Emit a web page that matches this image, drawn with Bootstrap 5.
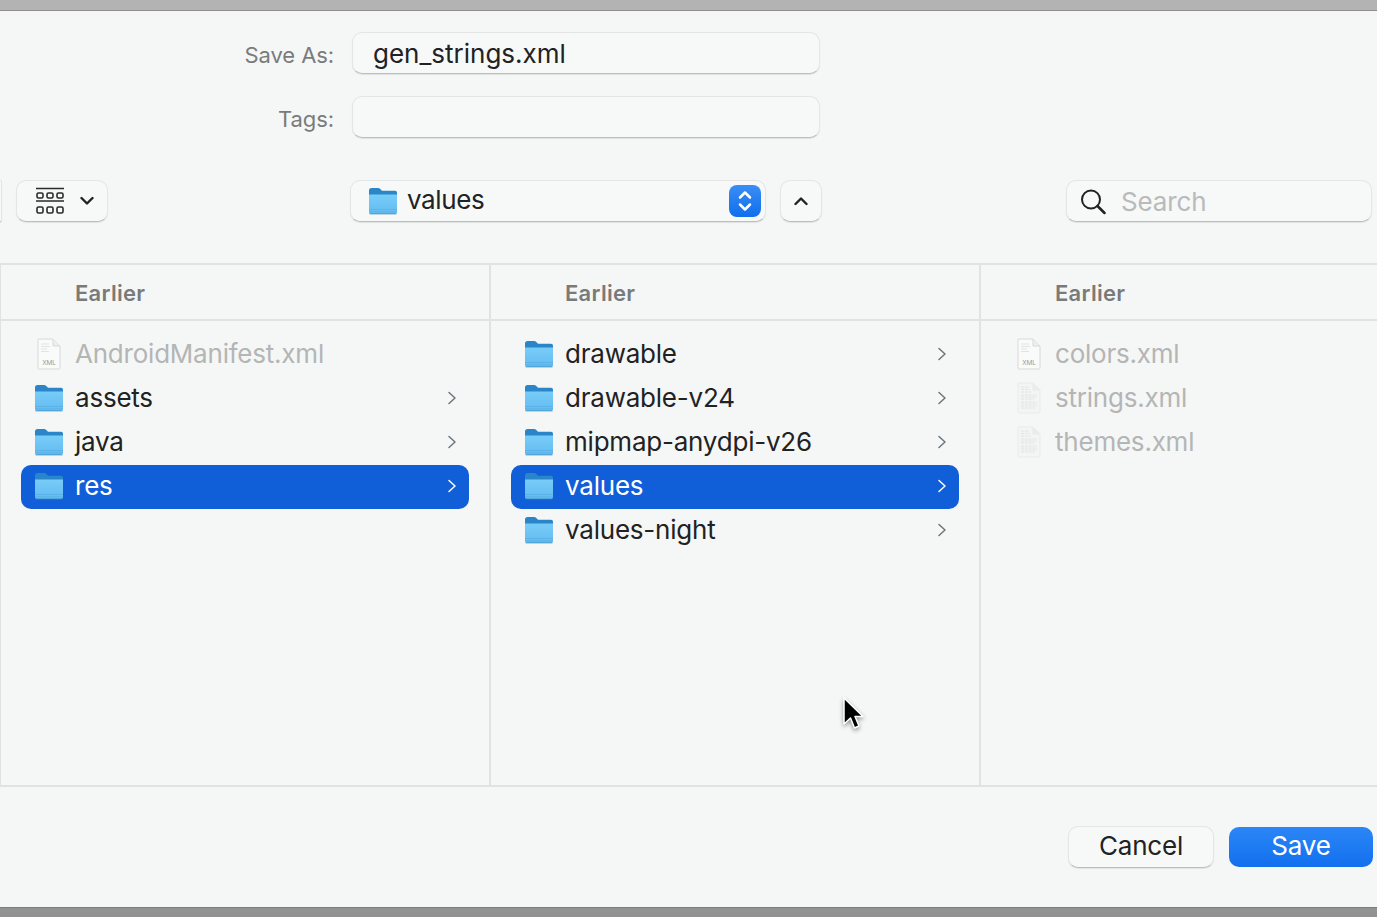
<!DOCTYPE html>
<html lang="en">
<head>
  <meta charset="UTF-8" />
  <title>Save</title>
  <meta name="viewport" content="width=device-width, initial-scale=1">
  <link href="https://cdn.jsdelivr.net/npm/bootstrap@5.3.3/dist/css/bootstrap.min.css" rel="stylesheet">
  <style>
    html, body { height: 917px; overflow: hidden; }
    body { background: #f5f7f6; font-family: Inter, "Liberation Sans", sans-serif; color: #222; position: relative; }
    .edge-top { height: 11px; background: #b3b3b3; border-bottom: 1px solid #8e8e8e; }
    .edge-bottom { height: 10px; background: #929292; border-top: 1px solid #7d7d7d; }
    .sheet { height: 896px; }
    .name-row { padding-top: 21px; height: 63px; }
    .tags-row { padding-top: 22px; height: 64px; }
    .field-label { width: 335px; padding-right: 1px; text-align: right; font-size: 22px; line-height: 46px; letter-spacing: -.1px; color: #7b7b7b; }
    .mac-field { margin-left: 17px; width: 468px; height: 42px; border: 1px solid #e4e5e5; border-bottom-color: #bdbdbd; border-radius: 10px; background: #f7f8f8; padding: 0 20px; font-size: 26px; line-height: 42px; color: #222; box-shadow: 0 1px 1px rgba(0,0,0,.08); }
    .tool-row { height: 42px; margin-top: 42px; }
    .mac-btn { height: 42px; background: #f7f8f8; border: 1px solid #e4e5e5; border-bottom-color: #bdbdbd; border-radius: 10px; box-shadow: 0 1px 1px rgba(0,0,0,.08); flex: none; }
    .stub-btn { width: 2px; border-left: 0; border-radius: 0 6px 6px 0; }
    .view-btn { width: 92px; margin-left: 14px; padding-left: 18px; gap: 15px; }
    .path-btn { width: 416px; margin-left: 242px; padding: 0 4px 0 17px; font-size: 26px; letter-spacing: -.4px; }
    .path-name { margin-left: 9px; flex: 1; line-height: 36px; padding-bottom: 3px; }
    .up-btn { width: 42px; margin-left: 14px; }
    .search-btn { width: 306px; margin-left: 244px; padding-left: 13px; font-size: 26px; letter-spacing: -.15px; color: #b9baba; }
    .search-btn span { margin-left: 15px; line-height: 40px; padding-top: 2px; }
    .stepper { width: 32px; height: 32px; border-radius: 8px; background: linear-gradient(#3a8df5, #0f6fec); }
    .browser { height: 524px; margin-top: 41px; border-top: 2px solid #e1e3e2; border-bottom: 2px solid #e1e3e2; border-left: 1px solid #e1e3e2; }
    .pane { width: 490px; flex: none; border-right: 2px solid #e1e3e2; }
    .pane-last { width: 396px; border-right: 0; }
    .pane-head { height: 56px; border-bottom: 2px solid #e1e3e2; padding-left: 74px; font-size: 22px; font-weight: 600; letter-spacing: .3px; color: #7a7a7a; line-height: 57px; }
    .pane-list { padding: 11px 20px 0; margin: 0; list-style: none; }
    .pane-last .pane-list { padding-right: 0; }
    .file-row { height: 44px; border-radius: 10px; padding-left: 12.500px; padding-right: 12px; font-size: 26px; letter-spacing: -.22px; line-height: 44px; }
    .file-row svg.ico { flex: none; }
    .file-name { margin-left: 11.500px; flex: 1; white-space: nowrap; }
    .is-off { color: #b4b5b5; }
    .is-picked { background: #115fd8; color: #fff; margin-top: 1px; margin-bottom: -1px; padding-bottom: 2px; }
    .footer-row { height: 42px; margin-top: 39px; padding-right: 4px; gap: 15px; }
    .cancel-btn { width: 146px; font-size: 26px; letter-spacing: -.2px; line-height: 36px; padding: 0 0 2px; text-align: center; color: #222; }
    .save-btn { width: 144px; height: 40px; border-radius: 10px; border: 0; background: linear-gradient(#2b87f6, #126fee); color: #fff; font-size: 26px; letter-spacing: -.2px; line-height: 36px; padding: 0 0 2px; }
    .arrow-cursor { position: absolute; left: 842px; top: 697px; filter: drop-shadow(0 2px 2px rgba(0,0,0,.4)); }
  </style>
</head>
<body>

<svg width="0" height="0" class="d-block position-absolute">
  <defs>
    <linearGradient id="folderFill" x1="0" y1="0" x2="0" y2="1">
      <stop offset="0" stop-color="#78ccf8"/>
      <stop offset="1" stop-color="#62bbf0"/>
    </linearGradient>
    <symbol id="folder" viewBox="0 0 30 28">
      <path d="M1 3.500C1 2 2 1 3.500 1h6.500c1 0 1.700.4 2.300 1l1.700 1.800H27c1.200 0 2 .8 2 2V9H1z" fill="#2a86c8"/>
      <path d="M1 7.500h28V25c0 1.300-.8 2-2 2H3c-1.200 0-2-.7-2-2z" fill="url(#folderFill)"/>
      <path d="M1 22.500h28M1 24.800h28" stroke="#58aee4" stroke-width=".7" fill="none"/>
      <path d="M1.500 26.900h27" stroke="#3f8dc4" stroke-width=".8" fill="none"/>
    </symbol>
    <symbol id="xmlfile" viewBox="0 0 26 32">
      <path d="M2 1h15l7 7v22c0 .6-.4 1-1 1H3c-.6 0-1-.4-1-1z" fill="#f9fafa" stroke="#d8d9d9"/>
      <path d="M17 1v7h7" fill="#eeeeee" stroke="#d8d9d9"/>
      <path d="M5 6h8M5 8.500h9M5 11h6M5 13.500h8" stroke="#e2e2e2" stroke-width="1"/>
      <text x="13" y="27" font-size="6.500" text-anchor="middle" fill="#9b9b9b" font-family="Inter, sans-serif">XML</text>
    </symbol>
    <symbol id="txtfile" viewBox="0 0 26 32">
      <path d="M2 1h15l7 7v22c0 .6-.4 1-1 1H3c-.6 0-1-.4-1-1z" fill="#f3f4f4" stroke="#e9eaea"/>
      <path d="M17 1v7h7" fill="#ebebeb" stroke="#e9eaea"/>
      <path d="M5 5h8M5 7.500h9M5 10h10M5 13h16M5 15h16M5 17h13M5 20h16M5 22h16M5 24h16M5 26h14" stroke="#dfe0e0" stroke-width=".8" stroke-dasharray="3 .8"/>
    </symbol>
    <symbol id="chev" viewBox="0 0 10 14">
      <path d="M2 1.500 8 7l-6 5.500" fill="none" stroke="currentColor" stroke-width="1.500" stroke-linecap="round" stroke-linejoin="round"/>
    </symbol>
  </defs>
</svg>

<div class="edge-top"></div>

<div class="sheet d-flex flex-column">
  <div class="name-row d-flex">
    <label class="field-label">Save As:</label>
    <div class="mac-field">gen_strings.xml</div>
  </div>
  <div class="tags-row d-flex">
    <label class="field-label">Tags:</label>
    <div class="mac-field"></div>
  </div>

  <div class="tool-row d-flex">
    <div class="mac-btn stub-btn"></div>
    <div class="mac-btn view-btn d-flex align-items-center">
      <svg width="30" height="28" viewBox="0 0 30 28" fill="none" stroke="#2a2a2a" stroke-width="1.600">
        <path d="M1 1.500h28M1 14h28" stroke-width="1.400"/>
        <rect x="2" y="6" width="6" height="5" rx="1.500"/><rect x="12" y="6" width="6" height="5" rx="1.500"/><rect x="22" y="6" width="6" height="5" rx="1.500"/>
        <rect x="2" y="20" width="6" height="6" rx="1.500"/><rect x="12" y="20" width="6" height="6" rx="1.500"/><rect x="22" y="20" width="6" height="6" rx="1.500"/>
      </svg>
      <svg width="14" height="10" viewBox="0 0 14 10"><path d="M1.500 2 7 7.500 12.500 2" fill="none" stroke="#222" stroke-width="2.400" stroke-linecap="round" stroke-linejoin="round"/></svg>
    </div>
    <div class="mac-btn path-btn d-flex align-items-center">
      <svg class="ico" width="30" height="28"><use href="#folder"/></svg>
      <span class="path-name">values</span>
      <div class="stepper d-flex align-items-center justify-content-center">
        <svg width="16" height="26" viewBox="0 0 16 26"><path d="M3 9.500 8 4.500 13 9.500M3 16.500 8 21.500 13 16.500" fill="none" stroke="#fff" stroke-width="2.500" stroke-linecap="round" stroke-linejoin="round"/></svg>
      </div>
    </div>
    <div class="mac-btn up-btn d-flex align-items-center justify-content-center">
      <svg width="14" height="10" viewBox="0 0 14 10"><path d="M1.500 8 7 2.500 12.500 8" fill="none" stroke="#222" stroke-width="2.400" stroke-linecap="round" stroke-linejoin="round"/></svg>
    </div>
    <div class="mac-btn search-btn d-flex align-items-center">
      <svg width="26" height="27" viewBox="0 0 26 27" fill="none" stroke="#222" stroke-width="2"><circle cx="11" cy="11.500" r="9"/><path d="m17.500 18 7 7" stroke-width="2.500" stroke-linecap="round"/></svg>
      <span>Search</span>
    </div>
  </div>

  <div class="browser d-flex">
    <div class="pane">
      <div class="pane-head">Earlier</div>
      <ul class="pane-list">
        <li class="file-row d-flex align-items-center is-off"><svg class="ico" width="30" height="32"><use href="#xmlfile"/></svg><span class="file-name">AndroidManifest.xml</span></li>
        <li class="file-row d-flex align-items-center"><svg class="ico" width="30" height="28"><use href="#folder"/></svg><span class="file-name">assets</span><svg width="10" height="14" class="text-secondary"><use href="#chev"/></svg></li>
        <li class="file-row d-flex align-items-center"><svg class="ico" width="30" height="28"><use href="#folder"/></svg><span class="file-name">java</span><svg width="10" height="14" class="text-secondary"><use href="#chev"/></svg></li>
        <li class="file-row d-flex align-items-center is-picked"><svg class="ico" width="30" height="28"><use href="#folder"/></svg><span class="file-name">res</span><svg width="10" height="14"><use href="#chev"/></svg></li>
      </ul>
    </div>
    <div class="pane">
      <div class="pane-head">Earlier</div>
      <ul class="pane-list">
        <li class="file-row d-flex align-items-center"><svg class="ico" width="30" height="28"><use href="#folder"/></svg><span class="file-name">drawable</span><svg width="10" height="14" class="text-secondary"><use href="#chev"/></svg></li>
        <li class="file-row d-flex align-items-center"><svg class="ico" width="30" height="28"><use href="#folder"/></svg><span class="file-name">drawable-v24</span><svg width="10" height="14" class="text-secondary"><use href="#chev"/></svg></li>
        <li class="file-row d-flex align-items-center"><svg class="ico" width="30" height="28"><use href="#folder"/></svg><span class="file-name">mipmap-anydpi-v26</span><svg width="10" height="14" class="text-secondary"><use href="#chev"/></svg></li>
        <li class="file-row d-flex align-items-center is-picked"><svg class="ico" width="30" height="28"><use href="#folder"/></svg><span class="file-name">values</span><svg width="10" height="14"><use href="#chev"/></svg></li>
        <li class="file-row d-flex align-items-center"><svg class="ico" width="30" height="28"><use href="#folder"/></svg><span class="file-name">values-night</span><svg width="10" height="14" class="text-secondary"><use href="#chev"/></svg></li>
      </ul>
    </div>
    <div class="pane pane-last">
      <div class="pane-head">Earlier</div>
      <ul class="pane-list">
        <li class="file-row d-flex align-items-center is-off"><svg class="ico" width="30" height="32"><use href="#xmlfile"/></svg><span class="file-name">colors.xml</span></li>
        <li class="file-row d-flex align-items-center is-off"><svg class="ico" width="30" height="32"><use href="#txtfile"/></svg><span class="file-name">strings.xml</span></li>
        <li class="file-row d-flex align-items-center is-off"><svg class="ico" width="30" height="32"><use href="#txtfile"/></svg><span class="file-name">themes.xml</span></li>
      </ul>
    </div>
  </div>

  <div class="footer-row d-flex justify-content-end align-items-center">
    <button type="button" class="mac-btn cancel-btn">Cancel</button>
    <button type="button" class="save-btn">Save</button>
  </div>
</div>

<div class="edge-bottom"></div>

<svg class="arrow-cursor" width="24" height="36" viewBox="0 0 24 36">
  <path d="M2 1v26l6.500-6 4 10 4.500-2-4-9.500H21z" fill="#000" stroke="#fff" stroke-width="1.500" stroke-linejoin="round"/>
</svg>

<script src="https://cdn.jsdelivr.net/npm/bootstrap@5.3.3/dist/js/bootstrap.bundle.min.js"></script>
</body>
</html>
